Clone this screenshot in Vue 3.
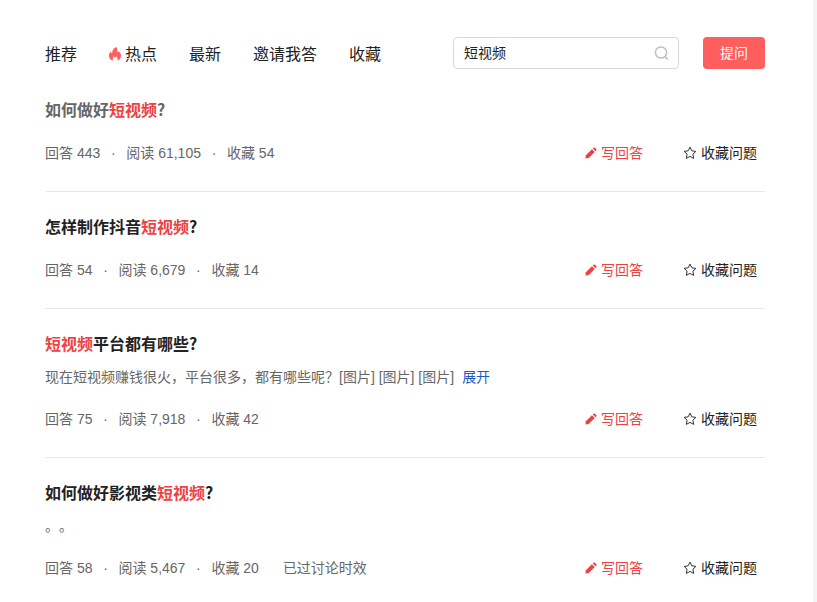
<script setup>
import { ref } from 'vue'

const keyword = ref('短视频')

const tabs = [
  { label: '推荐' },
  { label: '热点', hot: true },
  { label: '最新' },
  { label: '邀请我答' },
  { label: '收藏' },
]

const questions = [
  { before: '如何做好', after: '?', visited: true, answers: '443', reads: '61,105', favs: '54' },
  { before: '怎样制作抖音', after: '?', answers: '54', reads: '6,679', favs: '14' },
  {
    before: '',
    after: '平台都有哪些?',
    summary: '现在短视频赚钱很火，平台很多，都有哪些呢？[图片] [图片] [图片]',
    expandable: true,
    answers: '75',
    reads: '7,918',
    favs: '42',
  },
  { before: '如何做好影视类', after: '?', summary: '。。', answers: '58', reads: '5,467', favs: '20', note: '已过讨论时效' },
]
</script>

<template>
  <div class="page">
    <header class="header">
      <nav class="tabs">
        <a v-for="tab in tabs" :key="tab.label" class="tab" href="#">
          <svg v-if="tab.hot" class="flame" viewBox="0 0 12 14" aria-hidden="true">
            <path d="M7.200 0C8.300 1.500 8.600 3.200 8.100 5.200C8.800 5.100 9.400 4.700 9.800 4.200C11.200 5.400 12 7 12 8.800C12 11.200 10.600 13 8.400 13.800C9 12.200 8.400 10.800 7.300 9.300C6.900 10.200 6.400 10.600 5.700 10.800C5.600 10 5.300 9.300 4.800 8.800C4.500 10.400 3.300 11.400 4 13.800C1.600 13.100 0 11.200 0 8.800C0 7 0.700 5.700 1.500 4.800C1.900 5.600 2.400 6 3.100 6.200C3.100 3.500 4.700 1 7.200 0Z" />
          </svg>
          {{ tab.label }}
        </a>
      </nav>
      <form class="search" @submit.prevent>
        <input v-model="keyword" class="search-input" type="text" aria-label="搜索" />
        <button class="search-button" type="submit" aria-label="搜索">
          <svg class="search-icon" viewBox="0 0 16 16" aria-hidden="true">
            <circle cx="7" cy="7.500" r="5.600" />
            <path d="M11 11.600L13.500 14" />
          </svg>
        </button>
      </form>
      <button class="ask" type="button">提问</button>
    </header>

    <main class="list">
      <article v-for="(q, i) in questions" :key="i" class="item">
        <h2 class="title">
          <a class="title-link" :class="{ visited: q.visited }" href="#">{{ q.before }}<em class="match">短视频</em>{{ q.after }}</a>
        </h2>
        <p v-if="q.summary" class="summary">
          <span>{{ q.summary }}</span>
          <a v-if="q.expandable" class="expand" href="#">展开</a>
        </p>
        <div class="meta">
          <div class="stats">
            <span>回答 {{ q.answers }}</span>
            <span class="dot">·</span>
            <span>阅读 {{ q.reads }}</span>
            <span class="dot">·</span>
            <span>收藏 {{ q.favs }}</span>
            <span v-if="q.note" class="note">{{ q.note }}</span>
          </div>
          <div class="actions">
            <button class="action write" type="button">
              <svg class="pencil" viewBox="0 0 12 12" aria-hidden="true">
                <path d="M0.400 11.600L0.900 8.200L6.900 2.300L9.700 5.100L3.800 11.100Z" />
                <path d="M7.700 1.500L8.500 0.700Q9.200 0.100 9.900 0.700L11.300 2.100Q11.900 2.800 11.300 3.500L10.500 4.300Z" />
              </svg>
              写回答
            </button>
            <button class="action" type="button">
              <svg class="star" viewBox="0 0 14 14" aria-hidden="true">
                <path d="M7 1.100L8.800 4.800L12.900 5.400L9.900 8.200L10.700 12.400L7 10.400L3.300 12.400L4.100 8.200L1.100 5.400L5.200 4.800Z" />
              </svg>
              收藏问题
            </button>
          </div>
        </div>
      </article>
    </main>
  </div>
</template>

<style>
body {
  margin: 0;
  background: #fff;
}
</style>

<style scoped>
.page {
  box-sizing: border-box;
  min-height: 100vh;
  padding: 37px 48px 24px 45px;
  border-right: 4px solid #f4f4f5;
  background: #fff;
  color: #222;
  font-family: "Liberation Sans", "Noto Sans CJK SC", sans-serif;
  font-size: 14px;
  line-height: 20px;
}

a {
  color: inherit;
  text-decoration: none;
}

button,
input {
  margin: 0;
  font: inherit;
  color: inherit;
}

button {
  padding: 0;
  border: 0;
  background: none;
  cursor: pointer;
}

.header {
  display: flex;
  align-items: center;
  height: 32px;
}

.tabs {
  display: flex;
  gap: 32px;
  margin-right: auto;
  padding-top: 4px;
  font-size: 16px;
  line-height: 24px;
  white-space: nowrap;
}

.tab {
  display: flex;
  align-items: center;
  gap: 4px;
}

.flame {
  width: 12px;
  height: 14px;
  margin-bottom: 2px;
  fill: #ff5e5e;
}

.search {
  box-sizing: border-box;
  display: flex;
  align-items: center;
  width: 226px;
  height: 32px;
  margin-right: 24px;
  padding: 0 8px 0 10px;
  border: 1px solid #d8d8d8;
  border-radius: 4px;
}

.search-input {
  flex: 1;
  min-width: 0;
  height: 20px;
  padding: 0;
  border: 0;
  outline: 0;
  background: none;
}

.search-button {
  display: flex;
}

.search-icon {
  width: 16px;
  height: 16px;
  fill: none;
  stroke: #bfbfbf;
  stroke-width: 1.5;
  stroke-linecap: round;
}

.ask {
  width: 62px;
  height: 32px;
  border-radius: 4px;
  background: #ff5e5e;
  color: #fff;
}

.list {
  padding-top: 6px;
}

.item {
  padding: 24px 0 28px;
  border-bottom: 1px solid #e8e8e8;
}

.item:last-child {
  padding-bottom: 0;
  border-bottom: 0;
}

.title {
  margin: 0 0 2px;
  font-family: "Noto Sans CJK SC", sans-serif;
  font-size: 16px;
  font-weight: 700;
  line-height: 20px;
}

.visited {
  color: #666;
}

.match {
  color: #f04142;
  font-style: normal;
}

.summary {
  display: flex;
  gap: 8px;
  margin: 12px 0 0;
  color: #666;
  text-spacing-trim: space-all;
}

.expand {
  color: #1a5dc8;
}

.meta {
  display: flex;
  align-items: center;
  justify-content: space-between;
  margin-top: 22px;
  white-space: nowrap;
}

.title + .meta {
  margin-top: 24px;
}

.title + .summary {
  margin-top: 14px;
}

.title {
  margin-bottom: 0;
}

.stats {
  display: flex;
  gap: 10px;
  color: #666;
}

.dot {
  width: 6px;
  text-align: center;
}

.note {
  margin-left: 14px;
}

.actions {
  display: flex;
  gap: 40px;
  padding-right: 8px;
}

.action {
  display: flex;
  align-items: center;
  gap: 4px;
}

.write {
  color: #f04142;
}

.pencil {
  width: 12px;
  height: 12px;
  fill: #f04142;
}

.star {
  width: 14px;
  height: 14px;
  fill: none;
  stroke: #333;
  stroke-width: 1;
  stroke-linejoin: round;
}
</style>
